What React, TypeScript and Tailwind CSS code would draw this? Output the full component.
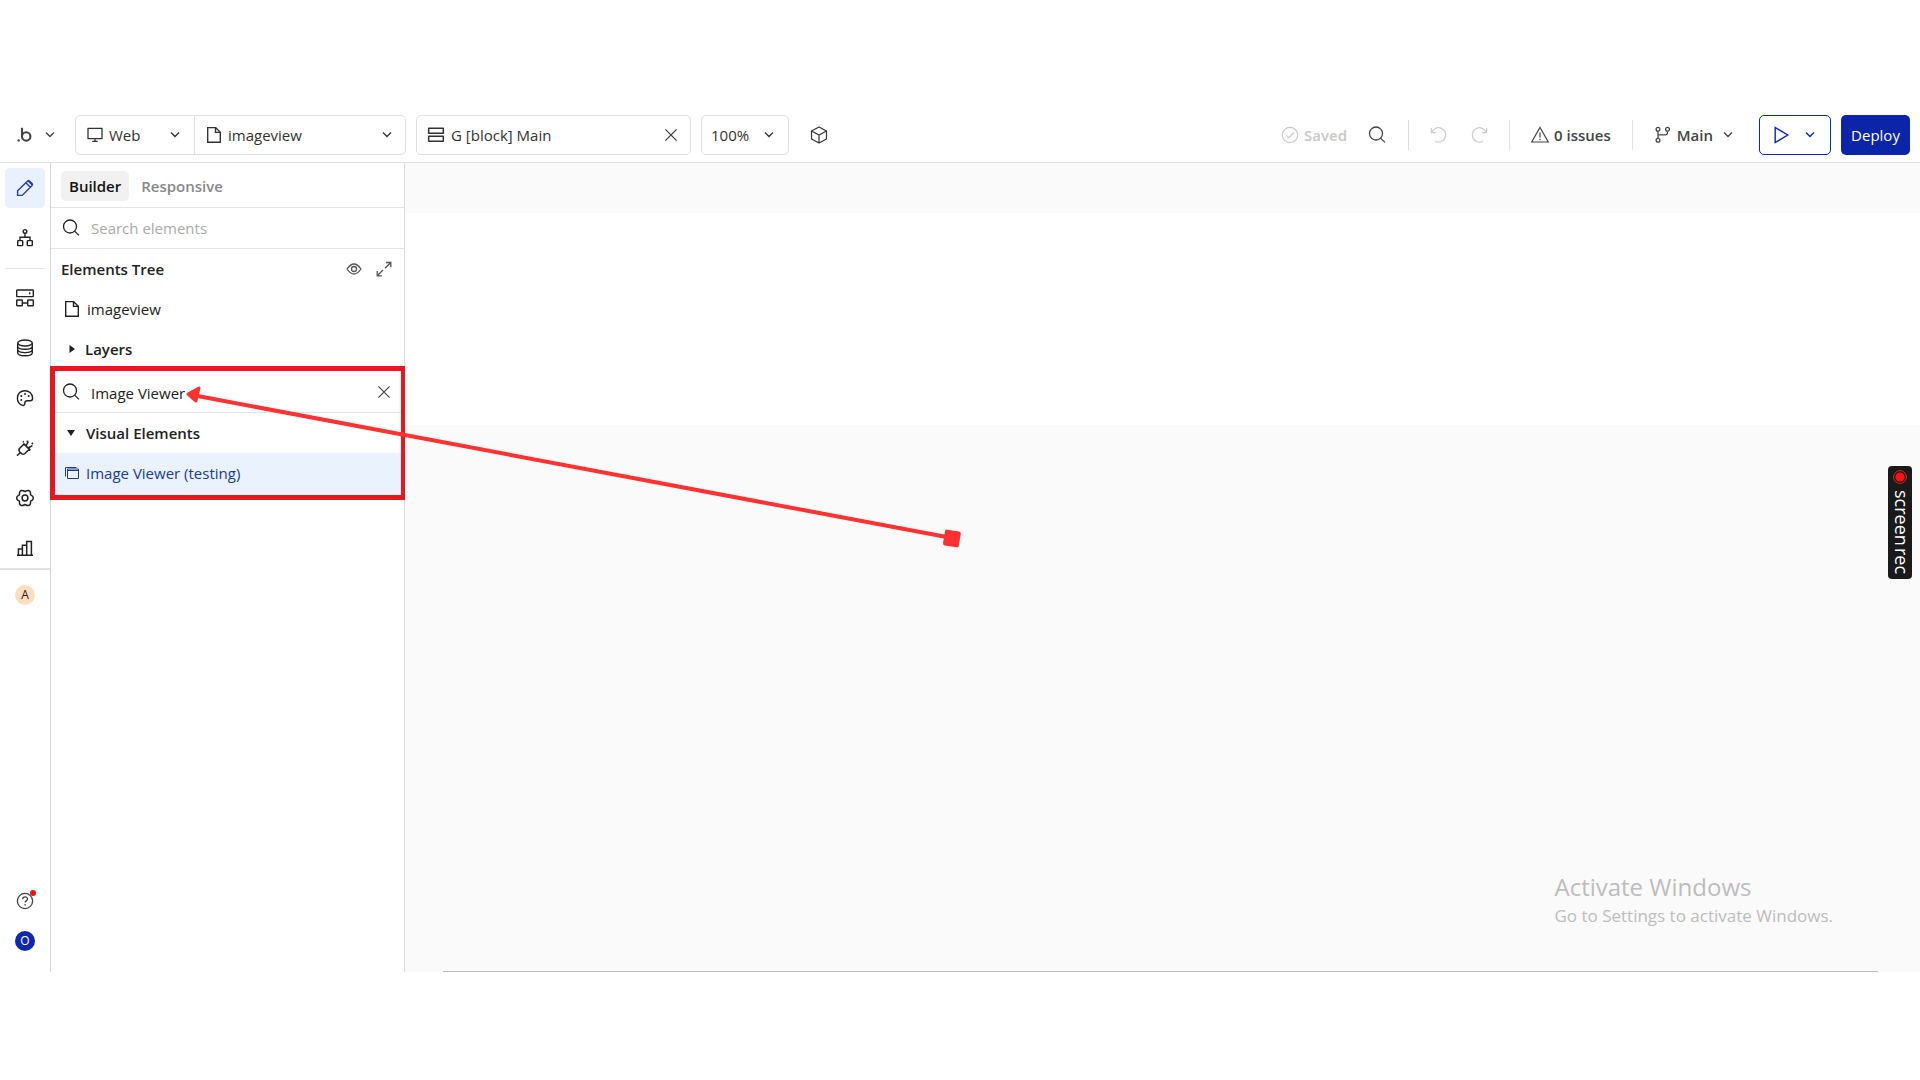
import { ReactNode } from "react";

type IconProps = {
  size?: number;
  className?: string;
  strokeWidth?: number;
  children?: ReactNode;
};

// All outline icons share a 20x20 grid
const Icon = ({
  size = 20,
  className = "",
  strokeWidth = 1.3,
  children,
}: IconProps) => (
  <svg
    width={size}
    height={size}
    viewBox="0 0 20 20"
    fill="none"
    stroke="currentColor"
    strokeWidth={strokeWidth}
    aria-hidden="true"
    className={`shrink-0 ${className}`}
  >
    {children}
  </svg>
);

const ChevronIcon = ({ className = "" }: { className?: string }) => (
  <svg
    width={10}
    height={10}
    viewBox="0 0 10 10"
    fill="none"
    stroke="currentColor"
    strokeWidth={1.4}
    aria-hidden="true"
    className={`pointer-events-none shrink-0 ${className}`}
  >
    <path d="M1 2.6 5 6.6 9 2.6" />
  </svg>
);

const SearchIcon = () => (
  <Icon>
    <circle cx="9" cy="8.5" r="6.5" />
    <path d="m13.6 13.1 4.3 4.3" />
  </Icon>
);

const FileIcon = () => (
  <Icon strokeWidth={1.4}>
    <path d="M3.7 2.6h8l4.6 4.6v10H3.7zM11.5 2.6v4.8h4.8" />
  </Icon>
);

const CloseIcon = () => (
  <Icon size={16} strokeWidth={1.4}>
    <path d="m3 3 14 14M17 3 3 17" />
  </Icon>
);

const LogoIcon = () => (
  <svg width={16} height={18} viewBox="0 0 16 18" fill="none" aria-hidden="true">
    <circle cx="1.6" cy="14.4" r="1.2" fill="currentColor" />
    <path d="M5 1.8v8.4" stroke="currentColor" strokeWidth="2.1" />
    <circle cx="9.2" cy="10.4" r="4.2" stroke="currentColor" strokeWidth="2.1" />
  </svg>
);

const RAIL_TOP = [
  {
    label: "Design",
    active: true,
    icon: (
      <Icon strokeWidth={1.4}>
        <path d="M2.6 17.4v-4.6L12.6 2.9q.9-.9 1.8 0l2.7 2.7q.9.9 0 1.8L7.2 17.4zM10.8 4.8l4.5 4.5M13 2.8l4.3 4.3" />
      </Icon>
    ),
  },
  {
    label: "Workflow",
    active: false,
    icon: (
      <Icon strokeWidth={1.4}>
        <circle cx="10" cy="3.4" r="1.8" />
        <path d="M10 5.2v4M5 12.5V9.3h10v3.2" />
        <rect x="2.7" y="12.6" width="5" height="5" rx=".6" />
        <rect x="12.3" y="12.6" width="5" height="5" rx=".6" />
      </Icon>
    ),
  },
];

const RAIL_MAIN = [
  {
    label: "Backend",
    icon: (
      <Icon strokeWidth={1.4}>
        <rect x="1.7" y="2" width="16.6" height="6.6" rx=".6" />
        <rect x="1.7" y="12" width="5.6" height="5.8" rx=".6" />
        <rect x="12.7" y="12" width="5.6" height="5.8" rx=".6" />
        <path d="M7.3 15h5.4M14.7 4.3v2" />
      </Icon>
    ),
  },
  {
    label: "Data",
    icon: (
      <Icon strokeWidth={1.4}>
        <ellipse cx="10" cy="5" rx="7.3" ry="3" />
        <path d="M2.7 5v9.7c0 1.7 3.3 3 7.3 3s7.3-1.3 7.3-3V5M2.7 8.3c0 1.7 3.3 3 7.3 3s7.3-1.3 7.3-3M2.7 11.6c0 1.7 3.3 3 7.3 3s7.3-1.3 7.3-3" />
      </Icon>
    ),
  },
  {
    label: "Styles",
    icon: (
      <Icon strokeWidth={1.4}>
        <path d="M9.8 2.7C5.4 2.7 2.4 5.9 2.4 10c0 4 2.6 6.5 5 7.3 1.5.5 2.4-.6 2.4-1.9 0-1.6 1-2.6 2.6-2.6h2.8c1.4 0 2.4-1.2 2.4-2.8 0-4.2-3.5-7.3-7.8-7.3z" />
        <g fill="currentColor" stroke="none">
          <circle cx="10" cy="5.9" r="1" />
          <circle cx="6.3" cy="8" r="1" />
          <circle cx="6.3" cy="12" r="1" />
          <circle cx="13.7" cy="8" r="1" />
        </g>
      </Icon>
    ),
  },
  {
    label: "Plugins",
    icon: (
      <Icon strokeWidth={1.5}>
        <path d="M2 17.8 5.6 14.200M8.400 5.400l7 7M9 6 4.700 10.300q-1.600 1.700 0 3.400l1.800 1.800q1.700 1.600 3.400 0l5-5M11 7.800l2.400-4.400M13.200 10l4.200-2.400M8.800 4.200 8 3.400M11.600 3.600l1.600-.4M16.800 6.200l1-1.400" />
      </Icon>
    ),
  },
  {
    label: "Settings",
    icon: (
      <Icon strokeWidth={1.5}>
        <path
          d="M18.200 9.200v1.600q-.2 1-2.600 2.400 0 2.600-.6 3.500l-1.300.8Q12.600 17.900 10 16.500q-2.600 1.400-3.700 1L5 16.700q-.6-.9-.6-3.500-2.400-1.400-2.600-2.400V9.200q.2-1 2.600-2.400 0-2.600.6-3.500l1.300-.8Q7.400 2.100 10 3.500q2.600-1.400 3.700-1l1.300.8q.6.9.6 3.500 2.400 1.400 2.600 2.400z"
          strokeLinejoin="round"
        />
        <circle cx="10" cy="10" r="2.9" />
      </Icon>
    ),
  },
  {
    label: "Logs",
    icon: (
      <Icon strokeWidth={1.5}>
        <path d="M2 17.2h16M3.4 17V11h4v6M7.4 17V7.2h4.3V17M11.7 17V3.4h4.7V17" />
      </Icon>
    ),
  },
];

const TopBar = () => (
  <header className="flex h-[55px] shrink-0 items-center border-b border-[#e2e2e2] pr-[10px] pl-[17px] text-[#333]">
    <button aria-label="Bubble menu" className="flex w-[58px] items-center gap-3 text-[#444]">
      <LogoIcon />
      <ChevronIcon />
    </button>

    <div className="flex h-10 w-[331px] rounded-[5px] border border-[#e0e0e0]">
      <div className="flex w-[119px] items-center gap-1 border-r border-[#e0e0e0] pr-[14px] pl-[9px]">
        <Icon className="text-[#333]">
          <path d="M3 3.3h14v10.4H3zM7.3 16.3h5.4M10 13.8v2.4" strokeLinejoin="round" />
        </Icon>
        <select aria-label="Platform" className="h-8 min-w-0 flex-1 appearance-none bg-transparent">
          <option>Web</option>
        </select>
        <ChevronIcon />
      </div>
      <div className="flex flex-1 items-center gap-1 pr-[13px] pl-[9px]">
        <FileIcon />
        <select aria-label="Page" className="h-8 min-w-0 flex-1 appearance-none bg-transparent">
          <option>imageview</option>
        </select>
        <ChevronIcon />
      </div>
    </div>

    <div className="ml-[10px] flex h-10 w-[275px] items-center gap-[5px] rounded-[5px] border border-[#e0e0e0] pr-[11px] pl-[9px]">
      <Icon strokeWidth={1.5}>
        <path d="M2.7 3.2h14.6v5H2.7zM2.7 11.2h14.6v5H2.7z" strokeLinejoin="round" />
      </Icon>
      <span className="flex-1">G [block] Main</span>
      <button aria-label="Close element">
        <CloseIcon />
      </button>
    </div>

    <div className="ml-[10px] flex h-10 w-[88px] items-center rounded-[5px] border border-[#e0e0e0] pr-[14px] pl-[9px]">
      <select aria-label="Zoom" className="h-8 min-w-0 flex-1 appearance-none bg-transparent">
        <option>100%</option>
      </select>
      <ChevronIcon />
    </div>

    <button aria-label="Components" className="ml-5">
      <Icon strokeWidth={1.2}>
        <path d="m10 2 7.5 4v8L10 18l-7.5-4V6zM2.5 6l7.5 4 7.5-4M10 10v8" strokeLinejoin="round" />
      </Icon>
    </button>

    <div className="ml-auto flex items-center font-semibold text-[#444]">
      <span className="flex items-center gap-1 text-[#c8c8c8]">
        <Icon strokeWidth={1.2}>
          <circle cx="10" cy="10" r="7.7" />
          <path d="m6.3 10.3 2.5 2.5 5-5.3" />
        </Icon>
        Saved
      </span>
      <button aria-label="Search" className="ml-5">
        <SearchIcon />
      </button>
      <span className="mr-5 ml-[21px] h-[30px] w-px bg-[#ddd]" />
      <button aria-label="Undo" className="text-[#ccc]">
        <Icon strokeWidth={1.2}>
          <path d="M2.3 3v4.6h4.6M2.8 7.3A7.2 7.2 0 1 1 6 16.2" />
        </Icon>
      </button>
      <button aria-label="Redo" className="ml-5 text-[#ccc]">
        <Icon strokeWidth={1.2}>
          <path d="M17.7 3v4.6h-4.6M17.2 7.3A7.2 7.2 0 1 0 14 16.2" />
        </Icon>
      </button>
      <span className="mx-5 h-[30px] w-px bg-[#e4e4e4]" />
      <button className="flex items-center gap-1">
        <Icon strokeWidth={1.2}>
          <path d="M10 2.5 18.3 17H1.7zM10 7.5v5M10 13.8v1.4" />
        </Icon>
        0 issues
      </button>
      <span className="mr-5 ml-[21px] h-[30px] w-px bg-[#e4e4e4]" />
      <button className="flex items-center gap-1">
        <Icon strokeWidth={1.3}>
          <circle cx="5" cy="4.3" r="1.9" />
          <circle cx="5" cy="15.3" r="1.9" />
          <circle cx="14.5" cy="4.3" r="1.9" />
          <path d="M5 6.2v7.2M14.5 6.2V8q0 1.8-1.8 1.8H5" />
        </Icon>
        Main
        <ChevronIcon className="ml-[6px]" />
      </button>
      <button
        aria-label="Preview"
        className="ml-[26px] flex h-10 w-[72px] items-center justify-between rounded-[5px] border border-[#0d28ad] pr-[15px] pl-[11px] text-[#0d28ad]"
      >
        <Icon strokeWidth={1.4}>
          <path d="M4.2 2.5 16.7 10 4.2 17.5z" />
        </Icon>
        <ChevronIcon />
      </button>
      <button className="ml-[10px] h-10 w-[69px] rounded-[5px] bg-[#0b24a8] font-medium text-white">
        Deploy
      </button>
    </div>
  </header>
);

const Rail = () => (
  <nav className="flex w-[51px] shrink-0 flex-col items-center border-r border-[#d6d6d6] pt-[5px] text-[#222]">
    <div className="flex flex-col gap-[10px]">
      {RAIL_TOP.map(({ label, active, icon }) => (
        <button
          key={label}
          aria-label={label}
          className={
            active
              ? "flex size-10 items-center justify-center rounded-[5px] bg-[#e8f1fd] text-[#2a3aa8]"
              : "flex size-10 items-center justify-center"
          }
        >
          {icon}
        </button>
      ))}
      <hr className="-mb-px border-[#e4e4e4]" />
      {RAIL_MAIN.map(({ label, icon }) => (
        <button key={label} aria-label={label} className="flex size-10 items-center justify-center">
          {icon}
        </button>
      ))}
    </div>
    <hr className="w-full border-t-2 border-[#dfdfdf]" />
    <span className="mt-[15px] flex size-5 items-center justify-center rounded-full bg-[#fddfbf] text-xs text-[#222]">
      A
    </span>
    <div className="mt-auto flex flex-col items-center gap-5 pb-[21px]">
      <button aria-label="Help" className="relative text-[#444]">
        <Icon>
          <circle cx="10" cy="10" r="7.6" />
          <path d="M7.7 8.3c0-3.1 4.8-3 4.8-.3 0 1.9-2.4 1.8-2.4 3.6M10.1 13v1.5" />
        </Icon>
        <span className="absolute -top-px -right-px size-[6px] rounded-full bg-[#ee1111]" />
      </button>
      <button className="flex size-5 items-center justify-center rounded-full bg-[#0d28ad] text-xs text-white">
        O
      </button>
    </div>
  </nav>
);

const ElementsPanel = () => (
  <aside className="flex w-[354px] shrink-0 flex-col border-r border-[#dcdcdc] text-[#222]">
    <div className="flex h-[45px] items-center gap-[5px] border-b border-[#e4e4e4] pt-px pl-[10px] font-semibold">
      <button className="h-[30px] rounded-[5px] bg-[#f1f1f1] px-2 text-[#111]">Builder</button>
      <button className="h-[30px] px-[7px] text-[#888]">Responsive</button>
    </div>
    <div className="flex h-[41px] items-center gap-[10px] border-b border-[#e4e4e4] px-[10px]">
      <SearchIcon />
      <input
        aria-label="Search elements"
        placeholder="Search elements"
        className="min-w-0 flex-1 outline-none placeholder:text-[#aaa]"
      />
    </div>
    <div className="flex h-10 items-center gap-[10px] px-[10px] pb-px">
      <h2 className="flex-1 font-semibold">Elements Tree</h2>
      <button aria-label="Toggle visibility" className="text-[#555]">
        <Icon>
          <path d="M3 10q7-10 14 0-7 10-14 0z" strokeLinejoin="round" />
          <circle cx="10" cy="10" r="2.5" />
        </Icon>
      </button>
      <button aria-label="Expand" className="text-[#555]">
        <Icon>
          <path d="M12 3.5h4.8v4.8M16.8 3.5 11 9.3M8 16.8H3.2V12M3.2 16.8 9 11" />
        </Icon>
      </button>
    </div>
    <button className="flex h-10 items-center gap-[5px] px-[11px] pb-px">
      <FileIcon />
      imageview
    </button>
    <button className="flex h-10 items-center gap-[10px] px-[18px] pb-px font-semibold">
      <svg width={6} height={8} viewBox="0 0 6 8" aria-hidden="true">
        <path d="M.5 0 6 4 .5 8z" fill="currentColor" />
      </svg>
      Layers
    </button>

    {/* highlighted search result */}
    <section className="relative pt-[3px]">
      <div className="flex h-[41px] items-center gap-[10px] border-b border-[#e4e4e4] px-[10px]">
        <SearchIcon />
        <input
          aria-label="Search new elements"
          defaultValue="Image Viewer"
          className="mt-px min-w-0 flex-1 outline-none"
        />
        <button aria-label="Clear search" className="px-[2px] text-[#444]">
          <CloseIcon />
        </button>
      </div>
      <button className="flex h-10 w-full items-center gap-[11px] pl-4 font-semibold">
        <svg width={8} height={6} viewBox="0 0 8 6" aria-hidden="true">
          <path d="M0 0h8L4 6z" fill="currentColor" />
        </svg>
        Visual Elements
      </button>
      <button className="flex h-[42px] w-full items-center gap-[5px] bg-[#e9f2fd] px-[10px] pb-[2px] text-[#213a92]">
        <Icon strokeWidth={1}>
          <path d="M6.500 6h11v9.500h-11zM6.500 7.500h11M4.500 13.500V4.500h11" />
        </Icon>
        Image Viewer (testing)
      </button>
      <div className="pointer-events-none absolute -top-[3px] -right-[2px] -bottom-[5px] -left-px border-5 border-[#e8171f]" />
    </section>
  </aside>
);

const Canvas = () => (
  <main className="relative flex flex-1 flex-col bg-[#fafafa]">
    <div className="mt-[50px] h-[212px] bg-white" />
    <div className="absolute right-[8px] top-[303px] flex h-[113px] w-6 flex-col items-center gap-[6px] rounded-[4px] bg-[#1a1a1a] pt-1 text-white">
      <svg width={14} height={14} viewBox="0 0 14 14" aria-hidden="true">
        <circle cx="7" cy="7" r="6.4" fill="none" stroke="#e22" />
        <circle cx="7" cy="7" r="4.6" fill="#f11" />
      </svg>
      <span className="pl-1 text-lg leading-6 font-medium [writing-mode:vertical-rl]">
        screen<span className="mt-[2px] inline-block">rec</span>
      </span>
    </div>
    <div className="mt-auto mr-[87px] mb-[41px] self-end text-[#bdbdbd]">
      <p className="text-2xl leading-[30px]">Activate Windows</p>
      <p className="text-[17px] leading-7">Go to Settings to activate Windows.</p>
    </div>
    <div className="mr-[42px] ml-[38px] h-px bg-[#bbb]" />
  </main>
);

const Arrow = () => (
  <svg
    width={780}
    height={170}
    viewBox="0 0 780 170"
    aria-hidden="true"
    className="pointer-events-none absolute top-[380px] left-[185px]"
  >
    <path d="M10 15.5 767 158" stroke="#ff3131" strokeWidth="4" />
    <path
      d="M3 14 14 8l-3 13z"
      fill="#ff3131"
      stroke="#ff3131"
      strokeWidth="3"
      strokeLinejoin="round"
    />
    <rect x="759" y="150.5" width="16" height="16" rx="2" fill="#ff3131" transform="rotate(9 767 158)" />
  </svg>
);

export default function App() {
  return (
    <div className="relative flex min-h-screen flex-col bg-white py-[108px] font-['Open_Sans','Noto_Sans',sans-serif] text-[15px] leading-5">
      <TopBar />
      <div className="flex flex-1">
        <Rail />
        <ElementsPanel />
        <Canvas />
      </div>
      <Arrow />
    </div>
  );
}
